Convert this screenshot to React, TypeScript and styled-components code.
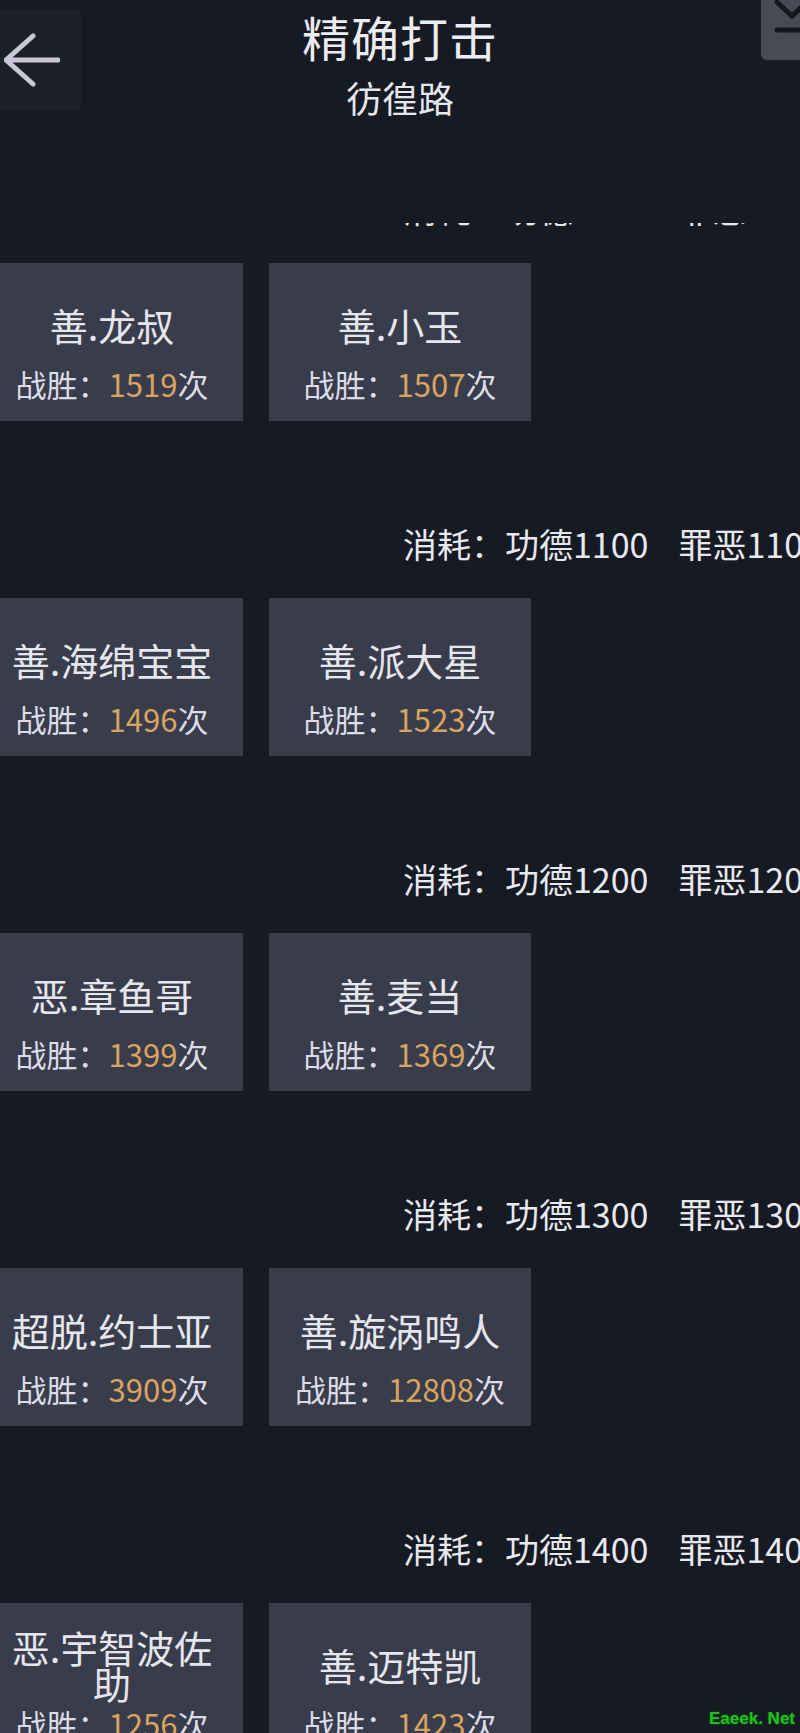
import styled, { createGlobalStyle } from "styled-components";

const GlobalStyle = createGlobalStyle`
  html, body {
    margin: 0;
    padding: 0;
    background: #161a23;
  }
`;

// style
const Page = styled.div`
  position: relative;
  display: flex;
  flex-direction: column;
  height: 1733px;
  overflow: hidden;
  background: #161a23;
  color: #e4e4ec;
  font-family: "Noto Sans CJK SC", "Noto Sans", sans-serif;
`;
const Header = styled.div`
  display: grid;
  grid-template-columns: 1fr auto 1fr;
  align-items: start;
  height: 223px;
  flex-shrink: 0;
`;
const BackButton = styled.button`
  justify-self: start;
  display: flex;
  align-items: center;
  width: 81px;
  height: 100px;
  margin-top: 10px;
  padding: 0 0 0 4px;
  border: none;
  background: #1d2029;
`;
const TitleBlock = styled.div`
  text-align: center;
  padding-top: 8px;
`;
const Title = styled.div`
  font-size: 48px;
  line-height: 56px;
  letter-spacing: 1px;
  color: #ececf2;
`;
const Subtitle = styled.div`
  margin-top: 11px;
  font-size: 36px;
  line-height: 44px;
  color: #e6e6ee;
`;
const CornerButton = styled.div`
  justify-self: end;
  width: 62px;
  height: 70px;
  margin-top: -8px;
  margin-right: -21px;
  box-sizing: border-box;
  border: 2px solid #1b1d23;
  border-radius: 8px;
  background: #484b55;
`;
const Viewport = styled.div`
  flex: 1;
  overflow: hidden;
`;
const List = styled.div<{ $scroll: number }>`
  margin-top: ${(p) => -p.$scroll}px;
  margin-left: -19px;
`;
const Group = styled.div`
  margin-bottom: 103px;
`;
const CostLine = styled.div`
  display: flex;
  gap: 30px;
  height: 40px;
  line-height: 40px;
  margin-bottom: 34px;
  padding-left: 422px;
  font-size: 34px;
  white-space: nowrap;
  color: #e8e8ef;
`;
const CardRow = styled.div`
  display: flex;
  gap: 26px;
`;
const Card = styled.div`
  display: flex;
  flex-direction: column;
  width: 262px;
  height: 158px;
  flex-shrink: 0;
  box-sizing: border-box;
  padding: 22px 14px 18px;
  background: #393d4b;
`;
const Name = styled.div`
  flex: 1;
  display: flex;
  align-items: center;
  justify-content: center;
  text-align: center;
  font-size: 38px;
  line-height: 36px;
  color: #e6e6ee;
`;
const Stats = styled.div`
  text-align: center;
  font-size: 31px;
  line-height: 38px;
  white-space: nowrap;
  color: #dcdce6;
`;
const Count = styled.span`
  color: #d8a460;
`;
const Watermark = styled.div`
  position: absolute;
  right: 5px;
  bottom: 4px;
  font-family: "Liberation Sans", sans-serif;
  font-weight: bold;
  font-size: 17px;
  color: #1fc21f;
  text-shadow: 0 0 2px #0c7a0c;
`;

const groups = [
  {
    cost: 1000,
    cards: [
      { name: "善.龙叔", wins: 1519 },
      { name: "善.小玉", wins: 1507 },
    ],
  },
  {
    cost: 1100,
    cards: [
      { name: "善.海绵宝宝", wins: 1496 },
      { name: "善.派大星", wins: 1523 },
    ],
  },
  {
    cost: 1200,
    cards: [
      { name: "恶.章鱼哥", wins: 1399 },
      { name: "善.麦当", wins: 1369 },
    ],
  },
  {
    cost: 1300,
    cards: [
      { name: "超脱.约士亚", wins: 3909 },
      { name: "善.旋涡鸣人", wins: 12808 },
    ],
  },
  {
    cost: 1400,
    cards: [
      { name: "恶.宇智波佐助", wins: 1256 },
      { name: "善.迈特凯", wins: 1423 },
    ],
  },
];

const App = () => {
  return (
    <Page>
      <GlobalStyle />
      <Header>
        <BackButton>
          <svg width="56" height="56" viewBox="0 0 56 56">
            <path
              d="M2 28 H54 M2 28 L29 4 M2 28 L29 52"
              stroke="#c9c8d6"
              strokeWidth="5"
              strokeLinecap="round"
              strokeLinejoin="round"
              fill="none"
            />
          </svg>
        </BackButton>
        <TitleBlock>
          <Title>精确打击</Title>
          <Subtitle>彷徨路</Subtitle>
        </TitleBlock>
        <CornerButton>
          <svg width="58" height="66" viewBox="0 0 58 66">
            <path
              d="M16 8 L31 22 L46 8 M16 36 H58"
              stroke="#15171c"
              strokeWidth="5"
              strokeLinecap="round"
              fill="none"
            />
          </svg>
        </CornerButton>
      </Header>
      <Viewport>
        <List $scroll={34}>
          {groups.map((g) => (
            <Group key={g.cost}>
              <CostLine>
                <span>消耗：功德{g.cost}</span>
                <span>罪恶{g.cost}</span>
              </CostLine>
              <CardRow>
                {g.cards.map((c) => (
                  <Card key={c.name}>
                    <Name>{c.name}</Name>
                    <Stats>
                      战胜：<Count>{c.wins}</Count>次
                    </Stats>
                  </Card>
                ))}
              </CardRow>
            </Group>
          ))}
        </List>
      </Viewport>
      <Watermark>Eaeek. Net</Watermark>
    </Page>
  );
};

export default App;
